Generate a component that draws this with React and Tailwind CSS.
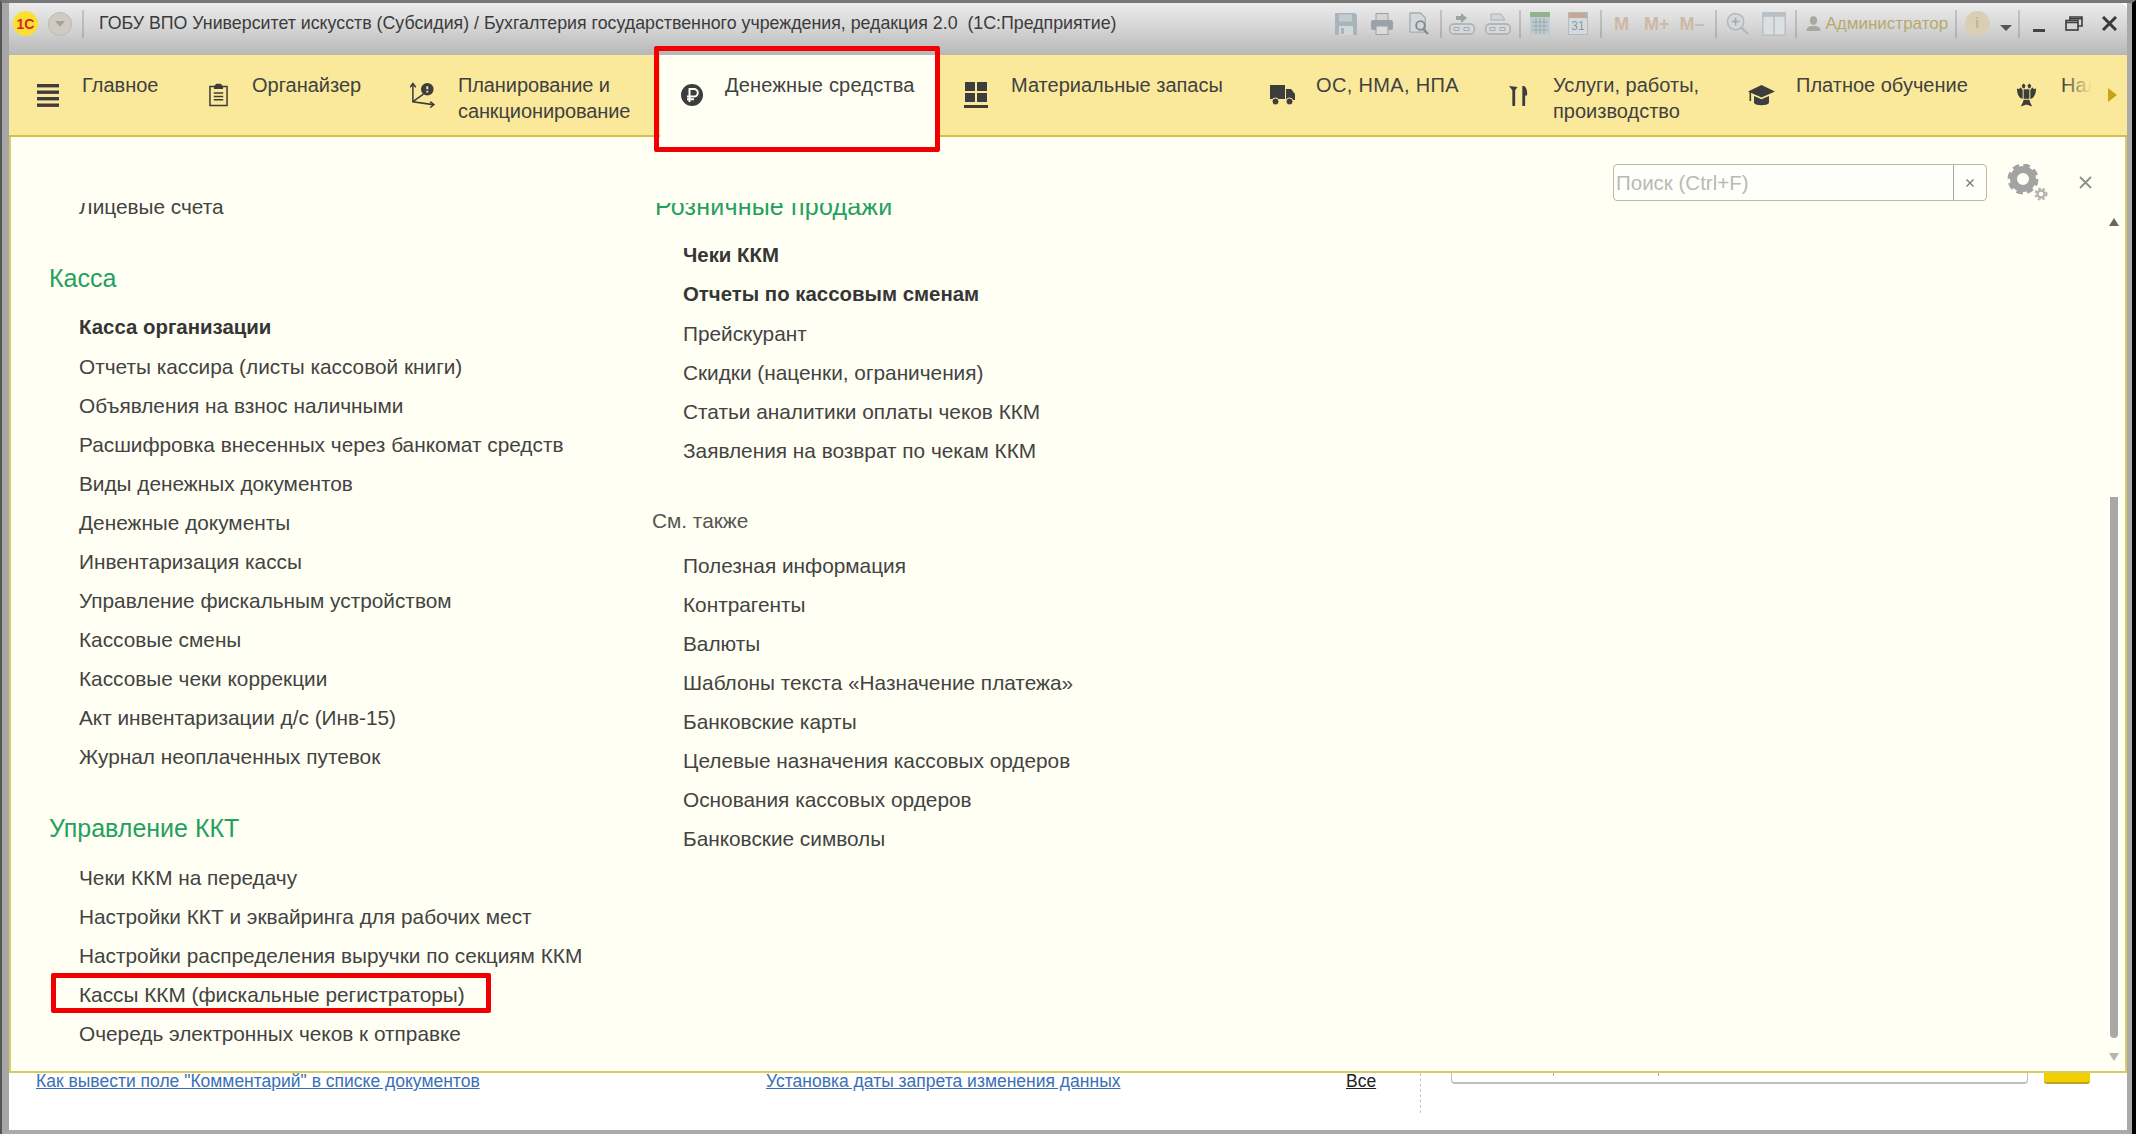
const FONT = "font-['Liberation_Sans',Arial,sans-serif]";

function Sep({ className }) {
  return <div className={`w-[2px] h-[28px] shrink-0 bg-gradient-to-b from-[#c4c4c4] to-[#b0b0b0] ${className}`} />;
}

function SaveIcon() {
  return (
    <svg viewBox="0 0 22 22" className="w-[22px] h-[22px] shrink-0 ml-[252px]" fill="#a9b4bd">
      <path d="M0 0h20l2 2v20H0z" />
      <rect x="4" y="1.5" width="13" height="7" fill="#c3ccd3" />
      <rect x="4" y="13" width="14" height="9" fill="#d2d7da" />
      <rect x="6" y="15" width="3" height="6" fill="#a9b4bd" />
    </svg>
  );
}

function PrintIcon() {
  return (
    <svg viewBox="0 0 22 22" className="w-[22px] h-[22px] shrink-0 ml-[14px]">
      <rect x="5" y="0.5" width="12" height="8" fill="#d5d5d5" stroke="#9aa2a8" />
      <rect x="0" y="7" width="22" height="10" rx="2" fill="#9aa2a8" />
      <rect x="5" y="13" width="12" height="8.5" fill="#dcdcdc" stroke="#9aa2a8" />
    </svg>
  );
}

function PreviewIcon() {
  return (
    <svg viewBox="0 0 22 24" className="w-[21px] h-[23px] shrink-0 ml-[16px]" fill="none">
      <path d="M1 1h11l5 5v15H1z" fill="#d3d8da" stroke="#a5adb2" strokeWidth="1.4" />
      <circle cx="12" cy="14" r="4.5" stroke="#7d8b93" strokeWidth="2" />
      <path d="M15 18l5 5" stroke="#7d8b93" strokeWidth="2.4" />
    </svg>
  );
}

function LinkIcon({ withPlus, className }) {
  return (
    <svg viewBox="0 0 26 24" className={`w-[26px] h-[24px] shrink-0 ${className}`} fill="none">
      {withPlus ? (
        <path d="M12 1l6 5-6 5V8H7V4h5z" fill="#9aa5a0" />
      ) : (
        <path d="M6 2h10l4 6H6z" fill="#d3d7d9" stroke="#a9b0b5" />
      )}
      <rect x="0.7" y="12" width="24.6" height="10" rx="4" fill="#d6d9db" stroke="#a4adb3" strokeWidth="1.4" />
      <rect x="5" y="15.5" width="5" height="3" stroke="#a4adb3" />
      <rect x="15" y="15.5" width="5" height="3" stroke="#a4adb3" />
    </svg>
  );
}

function TableIcon() {
  return (
    <svg viewBox="0 0 20 23" className="w-[20px] h-[23px] shrink-0 ml-[9px]">
      <rect width="20" height="23" fill="#c1ccd0" />
      <rect width="20" height="5" fill="#93b48e" />
      <path d="M6 6v16M10 6v16M14 6v16M2 10h16M2 14h16M2 18h16" stroke="#9aa8ad" strokeWidth="1" />
    </svg>
  );
}

function CalendarIcon() {
  return (
    <div className="relative w-[20px] h-[23px] shrink-0 ml-[18px] bg-[#d5dade] border border-[#b2bac0] overflow-hidden">
      <div className="h-[5px] bg-[#c9a892]" />
      <div className={`text-[12px] leading-[16px] text-center text-[#8a99a3] ${FONT}`}>31</div>
    </div>
  );
}

function ZoomIcon() {
  return (
    <svg viewBox="0 0 24 24" className="w-[23px] h-[23px] shrink-0 ml-[9px]" fill="none">
      <circle cx="10" cy="10" r="8.5" stroke="#b4b8ba" strokeWidth="1.6" fill="#d5d8d9" />
      <path d="M10 6v8M6 10h8" stroke="#a4a9ab" strokeWidth="1.6" />
      <path d="M16 16l7 7" stroke="#b4b8ba" strokeWidth="2.4" />
    </svg>
  );
}

function ColumnsIcon() {
  return (
    <svg viewBox="0 0 24 24" className="w-[24px] h-[24px] shrink-0 ml-[13px]" fill="#dcdfe0">
      <rect x="0.8" y="0.8" width="22.4" height="22.4" stroke="#b9c1c6" strokeWidth="1.6" />
      <rect x="0.8" y="0.8" width="22.4" height="4" fill="#b9c1c6" />
      <path d="M12 4v20" stroke="#b9c1c6" strokeWidth="1.6" />
    </svg>
  );
}

function PersonIcon() {
  return (
    <svg viewBox="0 0 15 16" className="w-[15px] h-[16px] shrink-0 ml-[9px]" fill="#aaa7a0">
      <ellipse cx="7.5" cy="4.5" rx="3.6" ry="4.2" />
      <path d="M0.5 15c0-4 3-5 7-5s7 1 7 5z" />
    </svg>
  );
}

function ToolM({ children, className }) {
  return <span className={`text-[18px] font-bold leading-none shrink-0 text-[#cdb9a2] ${FONT} ${className}`}>{children}</span>;
}

function TitleBar() {
  return (
    <div className="h-[52px] shrink-0 flex items-center pb-[11px] rounded-tr-[8px] bg-gradient-to-b from-[#ececec] via-[#d4d4d4] to-[#b7b7b7]">
      <div className="w-[25px] h-[25px] ml-[4px] shrink-0 rounded-full bg-[#fbe032] flex items-center justify-center">
        <span className={`text-[14px] font-bold leading-none text-[#d9261c] ${FONT}`}>1С</span>
      </div>
      <div className="w-[24px] h-[24px] ml-[10px] shrink-0 rounded-full bg-[#cfcbc2] border border-[#bdb9b0] flex items-center justify-center">
        <svg viewBox="0 0 10 6" className="w-[10px] h-[6px]" fill="#a8a49b">
          <path d="M0 0h10L5 6z" />
        </svg>
      </div>
      <Sep className="ml-[10px]" />
      <span className={`ml-[15px] w-[984px] shrink-0 whitespace-nowrap text-[17.8px] leading-none text-[#3b3b3b] ${FONT}`}>
        ГОБУ ВПО Университет искусств (Субсидия) / Бухгалтерия государственного учреждения, редакция 2.0&nbsp;&nbsp;(1С:Предприятие)
      </span>
      <SaveIcon />
      <PrintIcon />
      <PreviewIcon />
      <Sep className="ml-[10px]" />
      <LinkIcon withPlus className="ml-[7px]" />
      <LinkIcon className="ml-[10px]" />
      <Sep className="ml-[8px]" />
      <TableIcon />
      <CalendarIcon />
      <Sep className="ml-[12px]" />
      <ToolM className="ml-[12px]">M</ToolM>
      <ToolM className="ml-[15px]">M+</ToolM>
      <ToolM className="ml-[10px]">M–</ToolM>
      <Sep className="ml-[10px]" />
      <ZoomIcon />
      <ColumnsIcon />
      <Sep className="ml-[9px]" />
      <PersonIcon />
      <span className={`ml-[5px] text-[17px] leading-none whitespace-nowrap w-[123px] shrink-0 text-[#b5a96c] ${FONT}`}>Администратор</span>
      <Sep className="ml-[6px]" />
      <div className={`ml-[8px] w-[25px] h-[25px] shrink-0 rounded-full bg-[#d9cfb4] flex items-center justify-center text-[15px] font-bold text-[#c4b68f] ${FONT}`}>i</div>
      <svg viewBox="0 0 12 6" className="w-[12px] h-[6px] shrink-0 ml-[10px] mt-[8px]" fill="#555">
        <path d="M0 0h12L6 6z" />
      </svg>
      <Sep className="ml-[6px]" />
      <div className="w-[12px] h-[3px] shrink-0 ml-[13px] mt-[13px] bg-[#444]" />
      <svg viewBox="0 0 18 15" className="w-[18px] h-[15px] shrink-0 ml-[20px]" fill="none" stroke="#3d3d3d" strokeWidth="1.6">
        <rect x="1" y="4.5" width="12" height="9.5" />
        <path d="M1 6.5h12M5 4V1h12v9h-4M5 2.8h12" />
      </svg>
      <svg viewBox="0 0 15 15" className="w-[15px] h-[15px] shrink-0 ml-[19px]" stroke="#3a3a3a" strokeWidth="3">
        <path d="M1 1l13 13M14 1L1 14" />
      </svg>
    </div>
  );
}

const INK = "#3d3d3d";

const navIcons = {
  menu: (
    <svg viewBox="0 0 22 24" className="w-[22px] h-[24px]" fill={INK}>
      <rect y="1" width="22" height="3.4" />
      <rect y="7.5" width="22" height="3.4" />
      <rect y="14" width="22" height="3.4" />
      <rect y="20.5" width="22" height="3.4" />
    </svg>
  ),
  clipboard: (
    <svg viewBox="0 0 20 24" className="w-[19px] h-[24px]" fill="none" stroke={INK} strokeWidth="1.6">
      <path d="M6 3H1v20h18V3h-5" />
      <path d="M6 5V3l2-2h4l2 2v2z" fill={INK} />
      <path d="M5 10h10M5 13.5h10M5 17h10" />
    </svg>
  ),
  plan: (
    <svg viewBox="0 0 26 26" className="w-[25px] h-[26px]" fill="none" stroke={INK} strokeWidth="1.6">
      <path d="M3 1v19l21 3M3 20l11-8" />
      <path d="M0 5l3-4 3 4M21 20l4 3-4 3" />
      <circle cx="18" cy="7" r="6.5" fill={INK} stroke="none" />
      <path d="M17 4h2v3h-2zM17 8.500h2v2h-2z" fill="#fbe99b" stroke="none" />
    </svg>
  ),
  ruble: (
    <svg viewBox="0 0 22 22" className="w-[22px] h-[22px]">
      <circle cx="11" cy="11" r="11" fill={INK} />
      <path d="M8.500 18V5h4.500a3.800 3.800 0 0 1 0 7.600H6M6 15.300h7" fill="none" stroke="#fffff3" strokeWidth="2" />
    </svg>
  ),
  grid: (
    <svg viewBox="0 0 24 28" className="w-[24px] h-[28px]" fill={INK}>
      <rect x="1" y="1" width="10" height="9" />
      <rect x="13" y="1" width="10" height="9" />
      <rect x="1" y="12" width="10" height="9" />
      <rect x="13" y="12" width="10" height="9" />
      <rect y="24" width="24" height="3" />
    </svg>
  ),
  truck: (
    <svg viewBox="0 0 25 22" className="w-[25px] h-[22px]" fill={INK}>
      <rect y="1" width="15" height="14" />
      <path d="M16 5h5l4 5v6H16z" />
      <circle cx="5.500" cy="17.500" r="3.500" stroke="#fbe99b" />
      <circle cx="19.500" cy="17.500" r="3.500" stroke="#fbe99b" />
    </svg>
  ),
  cutlery: (
    <svg viewBox="0 0 20 22" className="w-[19px] h-[21px]" fill={INK}>
      <path d="M0 1l9 1-2.500 3.500V21a1.500 1.500 0 0 1-3 0V5.500z" />
      <path d="M14 1h2c2.500 2 3.500 5 3 10h-2v10a1.500 1.500 0 0 1-3 0z" />
    </svg>
  ),
  cap: (
    <svg viewBox="0 0 27 24" className="w-[27px] h-[24px]" fill={INK}>
      <path d="M13.500 2L27 8.500l-13.500 6L0 8.500z" />
      <path d="M6 13l7.500 3.300L21 13v7c-2 3-13 3-15 0z" />
      <rect x="1.500" y="9" width="1.600" height="9" />
    </svg>
  ),
  emblem: (
    <svg viewBox="0 0 22 26" className="w-[21px] h-[26px]" fill={INK}>
      <path d="M8 1l2 2-1 3H7L6 3zM14 1l2 2-1 3h-2l-1-3z" />
      <path d="M5 5l2 3v9c-3 0-6-4-6-11 1 1 3 1 4-1zM17 5l-2 3v9c3 0 6-4 6-11-1 1-3 1-4-1z" />
      <path d="M8 7h6v10H8z" />
      <path d="M8 18h6l1 3 2 4-6-2-6 2 2-4z" />
    </svg>
  ),
};

const navItems = [
  { icon: "menu", iconBox: "w-[45px]", box: "w-[172px]", lines: ["Главное"], text: "" },
  { icon: "clipboard", iconBox: "w-[43px]", box: "w-[201px]", lines: ["Органайзер"], text: "" },
  { icon: "plan", iconBox: "w-[48px]", box: "w-[250px]", lines: ["Планирование и", "санкционирование"], text: "tracking-[-0.1px]" },
  { icon: "ruble", iconBox: "w-[44px]", box: "w-[280px] pl-[21px] bg-[#fffff3] h-[82px] mr-[24px]", lines: ["Денежные средства"], text: "tracking-[0.2px]" },
  { icon: "grid", iconBox: "w-[47px]", box: "w-[306px]", lines: ["Материальные запасы"], text: "" },
  { icon: "truck", iconBox: "w-[46px]", box: "w-[239px]", lines: ["ОС, НМА, НПА"], text: "tracking-[0.35px]" },
  { icon: "cutlery", iconBox: "w-[44px]", box: "w-[239px]", lines: ["Услуги, работы,", "производство"], text: "" },
  { icon: "cap", iconBox: "w-[48px]", box: "w-[268px]", lines: ["Платное обучение"], text: "" },
  { icon: "emblem", iconBox: "w-[45px]", box: "w-[200px]", lines: ["Налоги и взносы"], text: "" },
];

function NavBar() {
  return (
    <div className="h-[82px] shrink-0 flex bg-[#fbe99b] border-b-2 border-[#d1c14b]">
      <div className="relative flex-1 min-w-0 h-[82px] flex overflow-hidden pl-[28px]">
        {navItems.map((item) => (
          <div key={item.icon} className={`shrink-0 flex ${item.box}`}>
            <div className={`h-[80px] shrink-0 flex items-center ${item.iconBox}`}>{navIcons[item.icon]}</div>
            <div className={`pt-[17px] text-[20px] leading-[26px] whitespace-nowrap text-[#414141] ${FONT} ${item.text}`}>
              {item.lines.map((line) => (
                <div key={line}>{line}</div>
              ))}
            </div>
          </div>
        ))}
        <div className="absolute right-0 top-0 h-[80px] w-[30px] bg-gradient-to-r from-[#fbe99b00] to-[#fbe99b]" />
      </div>
      <div className="w-[35px] shrink-0 h-[80px] flex items-center justify-start pl-[16px]">
        <svg viewBox="0 0 9 14" className="w-[9px] h-[14px]" fill="#c8a415">
          <path d="M0 0l9 7-9 7z" />
        </svg>
      </div>
    </div>
  );
}

function GearIcon() {
  return (
    <svg viewBox="0 0 41 37" className="w-[41px] h-[37px]" fill="none">
      <circle cx="16" cy="15" r="9.500" stroke="#a3a3a3" strokeWidth="7" />
      <circle cx="16" cy="15" r="13" stroke="#a3a3a3" strokeWidth="5" strokeDasharray="6.200 4" />
      <circle cx="34" cy="30" r="3.500" stroke="#b3b3b3" strokeWidth="2.500" />
      <circle cx="34" cy="30" r="5.500" stroke="#b3b3b3" strokeWidth="2" strokeDasharray="2.500 2" />
    </svg>
  );
}

function SearchRow() {
  return (
    <div className="h-[66px] shrink-0 flex justify-end pt-[27px] pr-[33px]">
      <div className={`w-[374px] h-[37px] shrink-0 flex rounded-[4px] border border-[#b9b9ae] bg-[#fffff9] text-[20.5px] ${FONT}`}>
        <div className="flex-1 flex items-center pl-[2px] pt-[2px] text-[#b9b9b9]">Поиск (Ctrl+F)</div>
        <div className="w-[33px] border-l border-[#a9a9a0] flex items-center justify-center">
          <svg viewBox="0 0 8 8" className="w-[8px] h-[8px]" stroke="#777" strokeWidth="1.300">
            <path d="M0.500 0.500l7 7M7.500 0.500l-7 7" />
          </svg>
        </div>
      </div>
      <div className="ml-[20px] shrink-0">
        <GearIcon />
      </div>
      <div className="ml-[31px] w-[13px] h-[37px] shrink-0 flex items-center">
        <svg viewBox="0 0 13 13" className="w-[13px] h-[13px]" stroke="#8e8e8e" strokeWidth="1.800">
          <path d="M1 1l11 11M12 1L1 12" />
        </svg>
      </div>
    </div>
  );
}

const kassa = [
  "Отчеты кассира (листы кассовой книги)",
  "Объявления на взнос наличными",
  "Расшифровка внесенных через банкомат средств",
  "Виды денежных документов",
  "Денежные документы",
  "Инвентаризация кассы",
  "Управление фискальным устройством",
  "Кассовые смены",
  "Кассовые чеки коррекции",
  "Акт инвентаризации д/с (Инв-15)",
  "Журнал неоплаченных путевок",
];

const kkt = [
  "Чеки ККМ на передачу",
  "Настройки ККТ и эквайринга для рабочих мест",
  "Настройки распределения выручки по секциям ККМ",
  "Кассы ККМ (фискальные регистраторы)",
  "Очередь электронных чеков к отправке",
];

const retail = ["Прейскурант", "Скидки (наценки, ограничения)", "Статьи аналитики оплаты чеков ККМ", "Заявления на возврат по чекам ККМ"];

const seeAlso = [
  "Полезная информация",
  "Контрагенты",
  "Валюты",
  "Шаблоны текста «Назначение платежа»",
  "Банковские карты",
  "Целевые назначения кассовых ордеров",
  "Основания кассовых ордеров",
  "Банковские символы",
];

function Row({ children, bold }) {
  return (
    <div className={`h-[39px] flex items-center whitespace-nowrap ${bold ? "text-[20.4px] font-bold text-[#363636]" : "text-[20.8px] text-[#434343]"}`}>
      {children}
    </div>
  );
}

function Heading({ children, className }) {
  return <div className={`h-[38px] pt-[2px] flex items-center text-[25px] whitespace-nowrap text-[#24a05f] ${className}`}>{children}</div>;
}

function Sections() {
  return (
    <div className={`grid grid-cols-[643px_1fr] -mt-[16px] ${FONT}`}>
      <div className="pl-[38px]">
        <div className="pl-[30px]">
          <Row>Лицевые счета</Row>
        </div>
        <Heading className="mt-[33px] mb-[11px]">Касса</Heading>
        <div className="pl-[30px]">
          <Row bold>Касса организации</Row>
          {kassa.map((t) => (
            <Row key={t}>{t}</Row>
          ))}
        </div>
        <Heading className="mt-[33px] mb-[11px]">Управление ККТ</Heading>
        <div className="pl-[30px]">
          {kkt.map((t) => (
            <Row key={t}>{t}</Row>
          ))}
        </div>
      </div>
      <div>
        <Heading className="mb-[11px] pl-[1px] tracking-[0.2px]">Розничные продажи</Heading>
        <div className="pl-[29px]">
          <Row bold>Чеки ККМ</Row>
          <Row bold>Отчеты по кассовым сменам</Row>
          {retail.map((t) => (
            <Row key={t}>{t}</Row>
          ))}
        </div>
        <div className="h-[30px] mt-[36px] mb-[10px] -ml-[2px] flex items-center text-[20.8px] text-[#555]">См. также</div>
        <div className="pl-[29px]">
          {seeAlso.map((t) => (
            <Row key={t}>{t}</Row>
          ))}
        </div>
      </div>
    </div>
  );
}

function ScrollBar() {
  return (
    <div className="w-[12px] mr-[5px] shrink-0 flex flex-col items-center">
      <svg viewBox="0 0 10 8" className="w-[10px] h-[8px] mt-[15px]" fill="#666">
        <path d="M5 0l5 8H0z" />
      </svg>
      <div className="w-[8px] h-[541px] mt-[271px] rounded-b-[4px] bg-[#a8a8a8]" />
      <svg viewBox="0 0 10 8" className="w-[10px] h-[8px] mt-[15px]" fill="#b5b5b5">
        <path d="M0 0h10L5 8z" />
      </svg>
    </div>
  );
}

function Panel() {
  return (
    <div className="h-[936px] shrink-0 flex flex-col bg-[#fffff3] border-x-2 border-b-2 border-[#d8cc6a]">
      <SearchRow />
      <div className="flex-1 min-h-0 flex">
        <div className="flex-1 min-w-0 overflow-hidden">
          <Sections />
        </div>
        <ScrollBar />
      </div>
    </div>
  );
}

function BottomStrip() {
  return (
    <div className={`flex-1 min-h-0 flex items-start overflow-hidden bg-white pl-[27px] text-[17.5px] leading-[20px] ${FONT}`}>
      <div className="w-[730px] shrink-0 -mt-[2px] whitespace-nowrap">
        <span className="text-[#3a6fb8] underline">Как вывести поле "Комментарий" в списке документов</span>
      </div>
      <div className="w-[580px] shrink-0 -mt-[2px] whitespace-nowrap">
        <span className="text-[#3a6fb8] underline">Установка даты запрета изменения данных</span>
      </div>
      <div className="w-[74px] shrink-0 -mt-[2px] text-[#222] underline">Все</div>
      <div className="h-[40px] w-[31px] shrink-0 border-l border-dashed border-[#c4c4c4]" />
      <div className="w-[577px] h-[11px] shrink-0 flex justify-start rounded-b-[4px] border-x border-b-2 border-[#bdbdbd] bg-white">
        <div className="w-[102px] h-[3px] border-r border-[#aaa]" />
        <div className="w-[105px] h-[3px] border-r border-[#aaa]" />
      </div>
      <div className="ml-[16px] w-[46px] h-[11px] shrink-0 rounded-b-[3px] bg-[#f2d000] border-b-2 border-[#b9a22a]" />
    </div>
  );
}

export default function App() {
  return (
    <div className="relative w-[2136px] h-[1134px] overflow-hidden bg-white border-t-[3px] border-t-[#777] border-l-[2px] border-l-[#555] border-r-[4px] border-r-black">
      <div className="h-full flex flex-col border-l-[7px] border-l-[#a6a6a6] border-r-[5px] border-r-[#a9a9a9] border-b-[4px] border-b-[#aaaaaa]">
        <TitleBar />
        <NavBar />
        <Panel />
        <BottomStrip />
      </div>
      {/* красные рамки-пометки поверх скриншота */}
      <div className="absolute left-[652px] top-[43px] w-[286px] h-[106px] rounded-[2px] border-[5px] border-[#f00000]" />
      <div className="absolute left-[49px] top-[970px] w-[440px] h-[40px] rounded-[2px] border-[5px] border-[#f00000]" />
    </div>
  );
}
